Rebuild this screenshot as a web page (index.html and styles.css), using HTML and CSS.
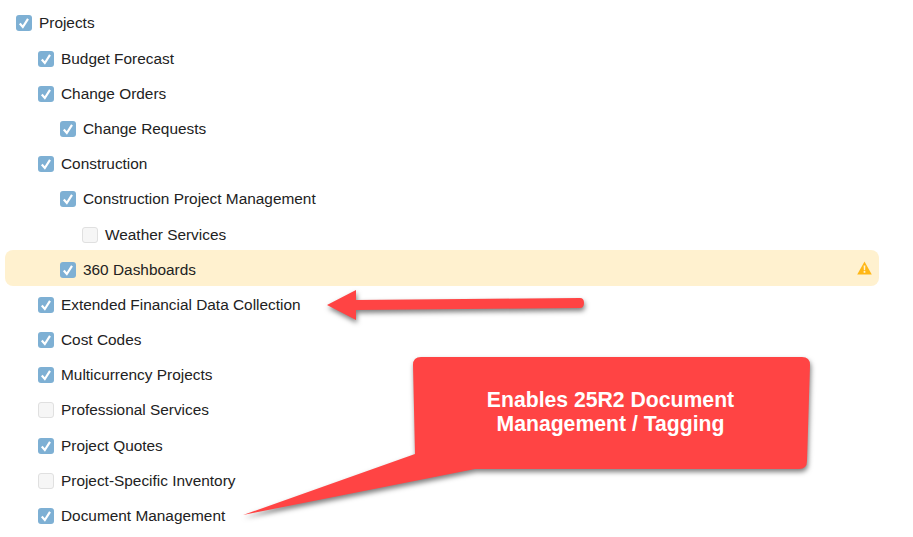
FILE: index.html
```html
<!DOCTYPE html>
<html lang="en">
<head>
<meta charset="utf-8">
<title>Projects features</title>
<link rel="stylesheet" href="styles.css">
</head>
<body>
<main class="canvas">
  <ul class="tree">
    <li class="row"><span class="box on"><svg viewBox="0 0 16 16"><path d="M3.8 8.6 6.8 12 12 3.8"/></svg></span><span>Projects</span></li>
    <li class="row l1"><span class="box on"><svg viewBox="0 0 16 16"><path d="M3.8 8.6 6.8 12 12 3.8"/></svg></span><span>Budget Forecast</span></li>
    <li class="row l1"><span class="box on"><svg viewBox="0 0 16 16"><path d="M3.8 8.6 6.8 12 12 3.8"/></svg></span><span>Change Orders</span></li>
    <li class="row l2"><span class="box on"><svg viewBox="0 0 16 16"><path d="M3.8 8.6 6.8 12 12 3.8"/></svg></span><span>Change Requests</span></li>
    <li class="row l1"><span class="box on"><svg viewBox="0 0 16 16"><path d="M3.8 8.6 6.8 12 12 3.8"/></svg></span><span>Construction</span></li>
    <li class="row l2"><span class="box on"><svg viewBox="0 0 16 16"><path d="M3.8 8.6 6.8 12 12 3.8"/></svg></span><span>Construction Project Management</span></li>
    <li class="row l3"><span class="box"></span><span>Weather Services</span></li>
    <li class="row l2 warn"><span class="box on"><svg viewBox="0 0 16 16"><path d="M3.8 8.6 6.8 12 12 3.8"/></svg></span><span>360 Dashboards</span>
      <svg class="warn-icon" viewBox="0 0 14 13"><path class="warn-tri" d="M7 .4 13.8 12.6H.2Z"/><path class="warn-mark" d="M6.2 4.2h1.6l-.2 4.4H6.4ZM6.2 9.4h1.6v1.6H6.2Z"/></svg></li>
    <li class="row l1"><span class="box on"><svg viewBox="0 0 16 16"><path d="M3.8 8.6 6.8 12 12 3.8"/></svg></span><span>Extended Financial Data Collection</span></li>
    <li class="row l1"><span class="box on"><svg viewBox="0 0 16 16"><path d="M3.8 8.6 6.8 12 12 3.8"/></svg></span><span>Cost Codes</span></li>
    <li class="row l1"><span class="box on"><svg viewBox="0 0 16 16"><path d="M3.8 8.6 6.8 12 12 3.8"/></svg></span><span>Multicurrency Projects</span></li>
    <li class="row l1"><span class="box"></span><span>Professional Services</span></li>
    <li class="row l1"><span class="box on"><svg viewBox="0 0 16 16"><path d="M3.8 8.6 6.8 12 12 3.8"/></svg></span><span>Project Quotes</span></li>
    <li class="row l1"><span class="box"></span><span>Project-Specific Inventory</span></li>
    <li class="row l1"><span class="box on"><svg viewBox="0 0 16 16"><path d="M3.8 8.6 6.8 12 12 3.8"/></svg></span><span>Document Management</span></li>
  </ul>
  <svg class="annotations" viewBox="0 0 913 537">
    <path class="shape" d="M327 305 356 290 356 300 580 298Q584 298 584 303Q584 308 580 308L356 310 356 320Z"/>
    <path class="shape" d="M421 357H802Q810 357 810 365L807 461Q807 469 799 469H475L243 515 415 454 413 365Q413 357 421 357Z"/>
  </svg>
  <p class="callout-text">Enables 25R2 Document<br>Management / Tagging</p>
</main>
</body>
</html>
```
FILE: styles.css
```css
html, body {
  margin: 0;
  padding: 0;
  background: #fff;
}

.canvas {
  position: relative;
  width: 913px;
  height: 537px;
  overflow: hidden;
  font-family: "Liberation Sans", Arial, sans-serif;
  font-size: 15.4px;
  color: #222;
}

.tree {
  list-style: none;
  margin: 0;
  padding: 3.9px 34px 0 5px;
}

.row {
  box-sizing: border-box;
  display: flex;
  align-items: center;
  gap: 7px;
  height: 35.18px;
  padding: 4px 7px 0 11px;
  border-radius: 8px;
}

.l1 { padding-left: 33px; }
.l2 { padding-left: 55px; }
.l3 { padding-left: 77px; }

.warn {
  height: 36px;
  margin-bottom: -0.82px;
  background: #fff1cf;
}

.box {
  box-sizing: border-box;
  flex: none;
  width: 16px;
  height: 16px;
  border: 1px solid #e0e0e0;
  border-radius: 3px;
  background: #f6f6f6;
}

.box.on {
  border: 0;
  background: #7eb0d4;
}

.box svg {
  display: block;
  width: 16px;
  height: 16px;
}

.box path {
  fill: none;
  stroke: #fff;
  stroke-width: 2.2;
}

.warn-icon {
  width: 15px;
  height: 14px;
  margin-left: auto;
  margin-top: -4px;
}

.warn-tri { fill: #ffb716; }
.warn-mark { fill: #fff3d2; }

.annotations {
  position: absolute;
  left: 0;
  top: 0;
  width: 913px;
  height: 537px;
}

.shape {
  fill: #ff4444;
  filter: drop-shadow(1.5px 3px 2.5px rgba(0, 0, 0, 0.5));
}

.callout-text {
  position: absolute;
  left: 413px;
  top: 388px;
  width: 395px;
  margin: 0;
  font-size: 21.2px;
  font-weight: 700;
  line-height: 24px;
  text-align: center;
  color: #fff;
}
```
